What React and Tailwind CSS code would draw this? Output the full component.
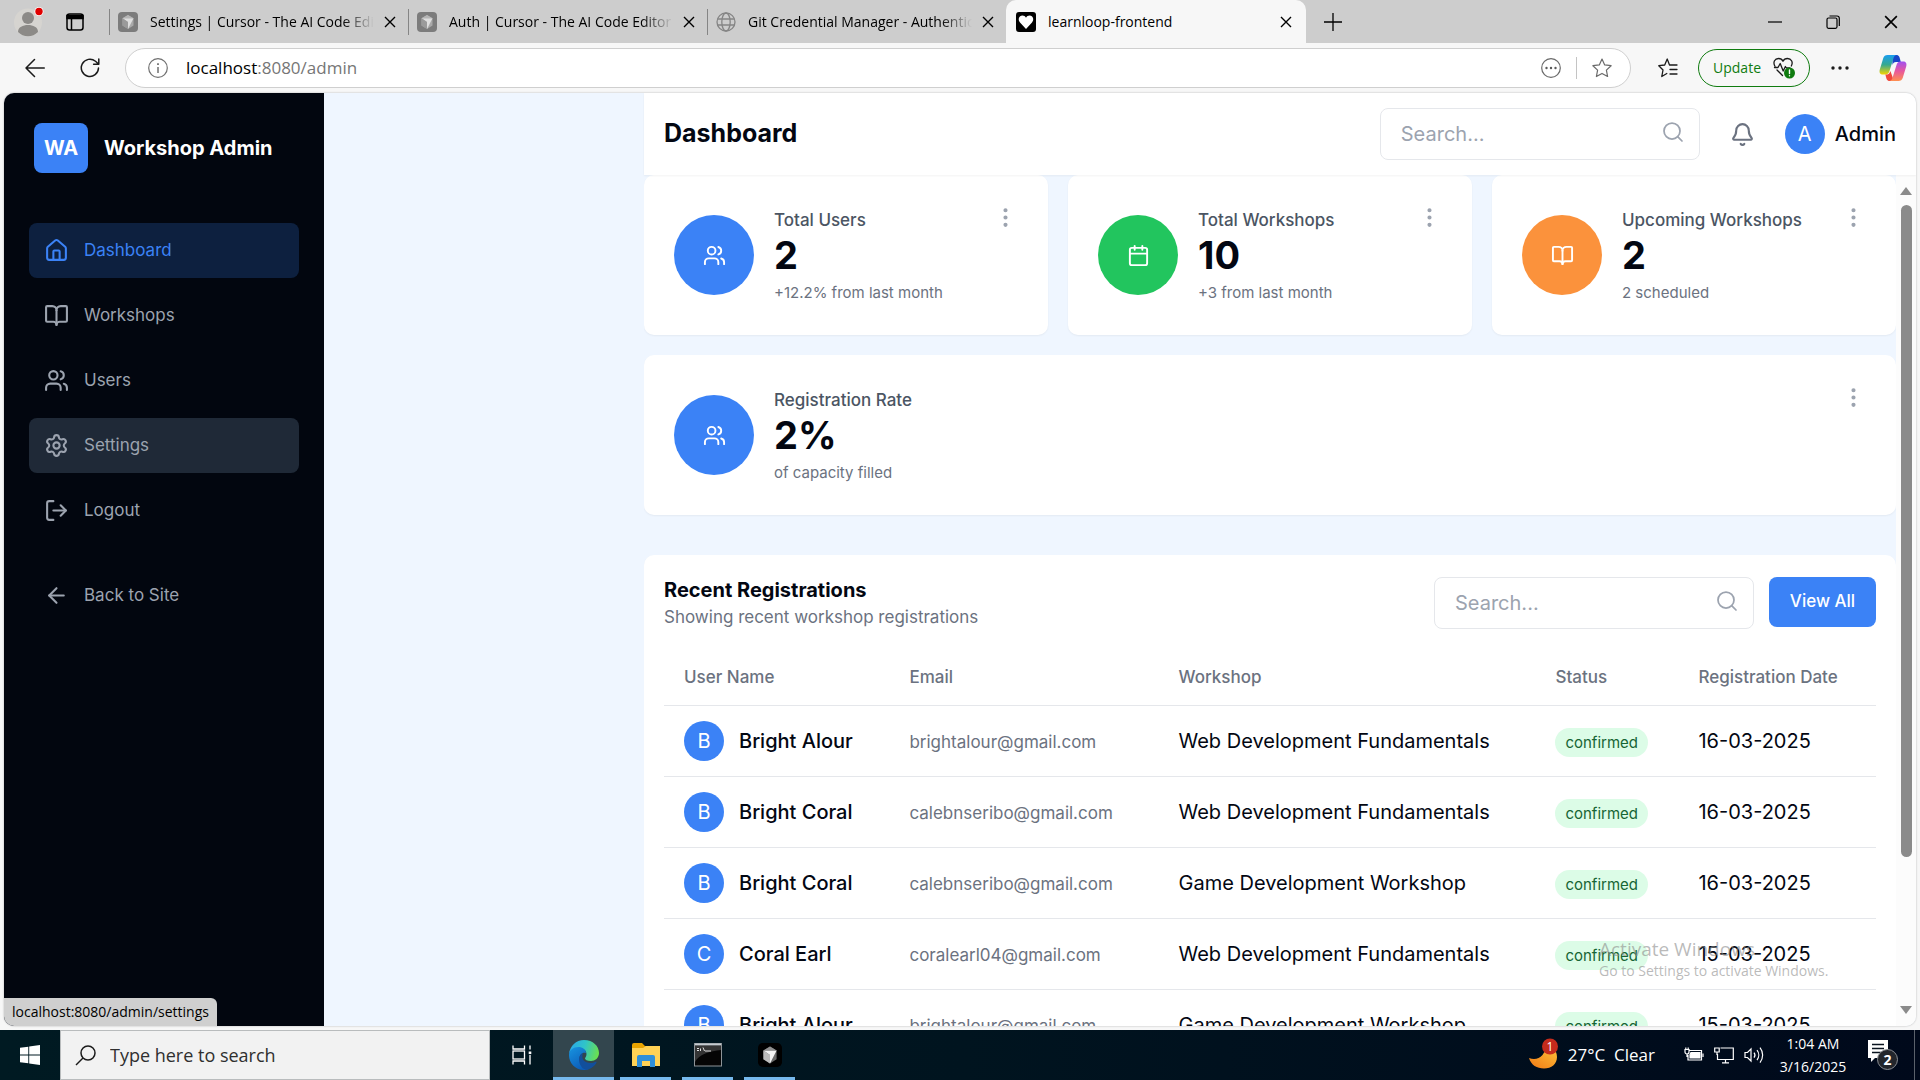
import React from "react";
import {
  ArrowLeft,
  Bell,
  BookOpen,
  Calendar,
  EllipsisVertical,
  House,
  LogOut,
  Search,
  Settings,
  Users,
} from "lucide-react";

const uiFont = "font-['Open_Sans','Noto_Sans',sans-serif]";

function CloseGlyph({ className = "h-3 w-3" }) {
  return (
    <svg viewBox="0 0 12 12" className={className} fill="none" stroke="currentColor" strokeWidth="1.4">
      <path d="M1 1l10 10M11 1L1 11" />
    </svg>
  );
}

function CubeIcon({ dark = false, className }) {
  return (
    <svg viewBox="0 0 20 20" className={className}>
      <rect width="20" height="20" rx="4" fill={dark ? "#000" : "#7c7c7c"} />
      <path d="M10 3l5.5 3.2v7.4L10 17l-5.500-3.400V6.200z" fill={dark ? "#6b6b6b" : "#a9a9a9"} />
      <path d="M4.500 6.200h11L10 17V10z" fill={dark ? "#f4f4f4" : "#dedede"} />
      <path d="M10 3l5.500 3.200h-11z" fill={dark ? "#8f8f8f" : "#b5b5b5"} />
      <path d="M4.500 6.200L10 10v7l-5.500-3.400z" fill={dark ? "#bdbdbd" : "#9a9a9a"} />
    </svg>
  );
}

function GlobeIcon() {
  return (
    <svg viewBox="0 0 20 20" className="h-5 w-5 shrink-0" fill="none" stroke="#858585" strokeWidth="1.3">
      <circle cx="10" cy="10" r="9" />
      <ellipse cx="10" cy="10" rx="4.200" ry="9" />
      <path d="M1.800 7h16.400M1.800 13h16.400" />
    </svg>
  );
}

function HeartIcon() {
  return (
    <svg viewBox="0 0 20 20" className="h-5 w-5 shrink-0">
      <rect width="20" height="20" rx="3" fill="#000" />
      <path d="M10 17L4 10.500C1.500 7.500 3 3.500 6.300 3.500c1.700 0 3 .8 3.700 2.200.7-1.400 2-2.200 3.700-2.200 3.300 0 4.800 4 2.300 7z" fill="#fff" />
    </svg>
  );
}

const tabs = [
  { title: "Settings | Cursor - The AI Code Editor", icon: <CubeIcon className="h-5 w-5 shrink-0" /> },
  { title: "Auth | Cursor - The AI Code Editor", icon: <CubeIcon className="h-5 w-5 shrink-0" /> },
  { title: "Git Credential Manager - Authentication", icon: <GlobeIcon /> },
];

function TabBar() {
  return (
    <div className="flex h-[43px] shrink-0 items-center bg-[#cdcdcd] text-black">
      <button aria-label="Profile" className="ml-3.5 flex">
        <svg viewBox="0 0 30 30" className="h-[30px] w-[30px]">
          <circle cx="14" cy="15.500" r="14" fill="#d6d4d0" />
          <circle cx="14" cy="11" r="6" fill="#8c8a87" />
          <path d="M4 25c0-5 5-7 10-7s10 2 10 7a14 14 0 0 1-20 0z" fill="#8c8a87" />
          <circle cx="25" cy="4.500" r="4.500" fill="#fff" />
          <circle cx="25" cy="4.500" r="3.700" fill="#e00000" />
        </svg>
      </button>
      <button aria-label="Tab actions" className="ml-[22px] flex">
        <svg viewBox="0 0 18 18" className="h-[18px] w-[18px]" fill="none" stroke="#000" strokeWidth="1.500">
          <rect x="1" y="1" width="16" height="16" rx="2.500" />
          <path d="M1 2.500h16v3H1z" fill="#000" />
          <path d="M5.500 5v12" />
        </svg>
      </button>
      <div className="ml-[25px] flex h-full items-center">
        {tabs.map((t) => (
          <div key={t.title} className="flex h-full w-[299px] items-center pr-3">
            <div className="mr-2 h-[26px] w-px bg-[#858585]" />
            {t.icon}
            <span className="ml-3 min-w-0 flex-1 overflow-hidden whitespace-nowrap text-sm [mask-image:linear-gradient(to_right,#000_86%,transparent)]">
              {t.title}
            </span>
            <button aria-label="Close tab" className="ml-2.5 flex">
              <CloseGlyph />
            </button>
          </div>
        ))}
      </div>
      <div className="flex h-full w-[300px] items-center rounded-t-[10px] bg-[#f7f7f7] pl-2.5 pr-3.5">
        <HeartIcon />
        <span className="ml-3 flex-1 text-sm">learnloop-frontend</span>
        <button aria-label="Close tab" className="flex">
          <CloseGlyph />
        </button>
      </div>
      <button aria-label="New tab" className="ml-[18px] flex">
        <svg viewBox="0 0 18 18" className="h-[18px] w-[18px]" stroke="#000" strokeWidth="1.300">
          <path d="M9 0v18M0 9h18" />
        </svg>
      </button>
      <div className="ml-auto mr-[22px] flex items-center gap-11">
        <button aria-label="Minimize" className="flex">
          <svg viewBox="0 0 14 14" className="h-3.5 w-3.5" stroke="#000" strokeWidth="1.200">
            <path d="M0 7h14" />
          </svg>
        </button>
        <button aria-label="Restore" className="flex">
          <svg viewBox="0 0 14 14" className="h-3.5 w-3.5" fill="none" stroke="#000" strokeWidth="1.200">
            <rect x="1" y="3" width="10" height="10.300" rx="1.500" />
            <path d="M3.500 1h7.500a2.300 2.300 0 0 1 2.300 2.300V11" />
          </svg>
        </button>
        <button aria-label="Close" className="flex">
          <CloseGlyph className="h-3.5 w-3.5" />
        </button>
      </div>
    </div>
  );
}

function CopilotIcon() {
  return (
    <svg viewBox="0 0 28 28" className="h-7 w-7">
      <defs>
        <linearGradient id="cpA" x1="0" y1="0" x2="0" y2="1">
          <stop offset="0" stopColor="#1a9df0" />
          <stop offset="0.500" stopColor="#35a98f" />
          <stop offset="1" stopColor="#f5d400" />
        </linearGradient>
        <linearGradient id="cpB" x1="0" y1="0" x2="0" y2="1">
          <stop offset="0" stopColor="#a050f0" />
          <stop offset="0.500" stopColor="#e8589c" />
          <stop offset="1" stopColor="#ff9050" />
        </linearGradient>
      </defs>
      <path d="M17 1c3 0 3.500 2 4 4l.8 3H17c-2 0-3 1-3.500 3L13 1z" fill="#1746c8" />
      <path d="M8.500 1H18c-2 0-3 1.500-3.600 3.500L10.500 17c-.7 2.300-1.800 3.500-4 3.500H4C1 20.500 0 18.500.8 15.500L4.300 4C5 2 6.300 1 8.500 1z" fill="url(#cpA)" />
      <path d="M11 27c-3 0-3.500-2-4-4l-.6-2.500c3 0 4-.5 5-3.500L15 27z" fill="#f0483c" />
      <path d="M19.500 27H10c2 0 3-1.500 3.600-3.500L17.500 11c.7-2.300 1.800-3.500 4-3.500H24c3 0 4 2 3.200 5L23.700 24c-.7 2-2 3-4.200 3z" fill="url(#cpB)" />
    </svg>
  );
}

function Toolbar() {
  return (
    <div className="flex h-[50px] shrink-0 items-center bg-[#f7f7f7]">
      <button aria-label="Back" className="ml-[25px] flex">
        <svg viewBox="0 0 20 20" className="h-5 w-5" fill="none" stroke="#1b1b1b" strokeWidth="1.500" strokeLinecap="round" strokeLinejoin="round">
          <path d="M19.300 10H1M9.500 1.500L1 10l8.500 8.500" />
        </svg>
      </button>
      <button aria-label="Refresh" className="ml-[35px] flex">
        <svg viewBox="0 0 20 20" className="h-5 w-5" fill="none" stroke="#1b1b1b" strokeWidth="1.500" strokeLinecap="round" strokeLinejoin="round">
          <path d="M18.500 10a8.600 8.600 0 1 1-3-6.700L18.500 6M18.800 1v5.200h-5.200" />
        </svg>
      </button>
      <div className="ml-[25px] flex h-10 min-w-0 flex-1 items-center rounded-full border border-[#cfcfcf] bg-white pl-[22px] pr-[18px]">
        <svg viewBox="0 0 20 20" className="h-5 w-5 shrink-0" fill="none" stroke="#707070" strokeWidth="1.200">
          <circle cx="10" cy="10" r="9.300" />
          <path d="M10 9v6" strokeWidth="1.500" />
          <path d="M10 5.200v1.800" strokeWidth="1.800" />
        </svg>
        <div className="ml-[18px] flex-1 text-[17px] text-[#767676]">
          <span className="text-black">localhost</span>:8080/admin
        </div>
        <button aria-label="More actions" className="flex">
          <svg viewBox="0 0 20 20" className="h-5 w-5" fill="none" stroke="#6a6a6a" strokeWidth="1.200">
            <circle cx="10" cy="10" r="9.300" />
            <g fill="#5a5a5a" stroke="none">
              <circle cx="5.500" cy="10" r="1.200" />
              <circle cx="10" cy="10" r="1.200" />
              <circle cx="14.500" cy="10" r="1.200" />
            </g>
          </svg>
        </button>
        <div className="mx-[15px] h-[22px] w-px bg-[#c4c4c4]" />
        <button aria-label="Favorite this page" className="flex">
          <svg viewBox="0 0 20 20" className="h-5 w-5" fill="none" stroke="#6a6a6a" strokeWidth="1.200" strokeLinejoin="round">
            <path d="M10 1l2.700 5.900 6.400.8-4.700 4.400 1.200 6.400L10 15.400l-5.600 3.100 1.200-6.400L.9 7.700l6.400-.8z" />
          </svg>
        </button>
      </div>
      <button aria-label="Favorites" className="ml-[27px] flex">
        <svg viewBox="0 0 20 20" className="h-5 w-5" fill="none" stroke="#1b1b1b" strokeWidth="1.300" strokeLinejoin="round" strokeLinecap="round">
          <path d="M11.500 7L9.200 1 6.700 7 .8 7.700 5 12l-1.200 6.500 5-3M11.500 7H19M12 11.500h7M12 16h7" />
        </svg>
      </button>
      <button className="ml-5 flex h-[38px] items-center gap-3 rounded-full border border-[#107c10] px-3.5 text-sm text-[#107c10]">
        Update
        <svg viewBox="0 0 22 22" className="h-[22px] w-[22px]" fill="none" stroke="#1b1b1b" strokeWidth="1.300" strokeLinejoin="round" strokeLinecap="round">
          <path d="M2 9.500C-.5 5 2 1.500 5.500 1.500c2 0 3.700 1 4.500 2.700.8-1.700 2.500-2.700 4.500-2.700 3.600 0 6 3.500 3.800 7.500M4 13l5.500 5.500M1.500 10.500H5l2.200-4 3 7.500 2.200-4.500 1 1.500H17" />
          <circle cx="16.500" cy="16" r="5.500" fill="#107c10" stroke="none" />
          <path d="M16.500 13v3.500M16.500 18.700v.1" stroke="#fff" strokeWidth="1.400" />
        </svg>
      </button>
      <button aria-label="Settings and more" className="ml-[21px] flex">
        <svg viewBox="0 0 18 4" className="h-1 w-[18px]" fill="#1b1b1b">
          <circle cx="2" cy="2" r="1.700" />
          <circle cx="9" cy="2" r="1.700" />
          <circle cx="16" cy="2" r="1.700" />
        </svg>
      </button>
      <button aria-label="Copilot" className="ml-[30px] mr-[13px] flex">
        <CopilotIcon />
      </button>
    </div>
  );
}

const navItems = [
  { label: "Dashboard", Icon: House, look: "bg-[#0d203f] text-[#3b82f6]" },
  { label: "Workshops", Icon: BookOpen, look: "text-[#9ca3af]" },
  { label: "Users", Icon: Users, look: "text-[#9ca3af]" },
  { label: "Settings", Icon: Settings, look: "bg-[#1f2937] text-[#9ca3af]" },
  { label: "Logout", Icon: LogOut, look: "text-[#9ca3af]" },
];

function NavLink({ label, Icon, look }) {
  return (
    <a href="#" className={`flex h-[55px] items-center gap-[15px] rounded-lg px-[15px] text-[17px] ${look}`}>
      <Icon size={25} strokeWidth={2} />
      {label}
    </a>
  );
}

function Sidebar() {
  return (
    <aside className="w-80 shrink-0 bg-[#02060f] px-[25px] py-[30px]">
      <div className="flex items-center gap-4 px-[5px]">
        <div className="flex h-[50px] w-[54px] items-center justify-center rounded-lg bg-[#3b82f6] text-xl font-bold text-white">
          WA
        </div>
        <span className="whitespace-nowrap text-xl font-bold text-white">Workshop Admin</span>
      </div>
      <nav className="mt-[50px] flex flex-col gap-2.5">
        {navItems.map((n) => (
          <NavLink key={n.label} {...n} />
        ))}
      </nav>
      <div className="mt-[30px]">
        <NavLink label="Back to Site" Icon={ArrowLeft} look="text-[#9ca3af]" />
      </div>
    </aside>
  );
}

function SearchBox({ label }) {
  return (
    <label className="relative block">
      <span className="sr-only">{label}</span>
      <input
        type="text"
        placeholder="Search..."
        className="block h-[52px] w-80 rounded-lg border border-[#e5e7eb] bg-white px-5 text-xl outline-none placeholder:text-[#9ca3af]"
      />
      <Search size={24} strokeWidth={1.75} className="absolute right-[15px] top-3 text-[#9ca3af]" />
    </label>
  );
}

function Avatar({ letter }) {
  return (
    <div className="flex h-10 w-10 shrink-0 items-center justify-center rounded-full bg-[#3b82f6] text-xl text-white">
      {letter}
    </div>
  );
}

function StatCard({ title, value, note, Icon, color, span = "" }) {
  return (
    <section className={`flex h-40 items-center gap-5 rounded-[10px] bg-white px-[30px] shadow-xs ${span}`}>
      <div className={`flex h-20 w-20 shrink-0 items-center justify-center rounded-full text-white ${color}`}>
        <Icon size={23} strokeWidth={2} />
      </div>
      <div className="flex-1">
        <h3 className="whitespace-nowrap text-[17px] font-medium leading-[25px] text-[#4b5563]">{title}</h3>
        <p className="text-[38px] font-bold leading-[45px] text-[#030712]">{value}</p>
        <p className="mt-[5px] text-[15px] leading-5 text-[#6b7280]">{note}</p>
      </div>
      <button aria-label={`${title} options`} className="mt-[30px] flex self-start text-[#9ca3af]">
        <EllipsisVertical size={25} />
      </button>
    </section>
  );
}

const rows = [
  ["Bright Alour", "brightalour@gmail.com", "Web Development Fundamentals", "16-03-2025"],
  ["Bright Coral", "calebnseribo@gmail.com", "Web Development Fundamentals", "16-03-2025"],
  ["Bright Coral", "calebnseribo@gmail.com", "Game Development Workshop", "16-03-2025"],
  ["Coral Earl", "coralearl04@gmail.com", "Web Development Fundamentals", "15-03-2025"],
  ["Bright Alour", "brightalour@gmail.com", "Game Development Workshop", "15-03-2025"],
];

function Registrations() {
  return (
    <section className="mt-10 rounded-[10px] bg-white p-5 shadow-xs">
      <div className="mb-5 flex items-center justify-between">
        <div>
          <h2 className="text-xl font-bold leading-[30px] text-[#030712]">Recent Registrations</h2>
          <p className="text-[17px] leading-[25px] text-[#6b7280]">Showing recent workshop registrations</p>
        </div>
        <div className="flex items-start gap-[15px]">
          <SearchBox label="Search registrations" />
          <button className="h-[50px] w-[107px] rounded-lg bg-[#3b82f6] text-[17px] font-medium text-white">View All</button>
        </div>
      </div>
      <table className="w-full table-fixed text-left">
        <colgroup>
          <col className="w-[18.6%]" />
          <col className="w-[22.2%]" />
          <col className="w-[31.1%]" />
          <col className="w-[11.8%]" />
          <col className="w-[16.3%]" />
        </colgroup>
        <thead>
          <tr className="border-b border-[#e5e7eb] text-[17px] leading-[25px] text-[#6b7280]">
            {["User Name", "Email", "Workshop", "Status", "Registration Date"].map((h) => (
              <th key={h} className="whitespace-nowrap px-5 py-[15px] font-medium">
                {h}
              </th>
            ))}
          </tr>
        </thead>
        <tbody>
          {rows.map(([name, email, workshop, date], i) => (
            <tr key={i} className="border-b border-[#e5e7eb] text-xl text-[#030712]">
              <td className="px-5 py-[15px]">
                <div className="flex items-center gap-[15px]">
                  <Avatar letter={name[0]} />
                  <span className="whitespace-nowrap font-medium">{name}</span>
                </div>
              </td>
              <td className="px-5">
                <span className="text-[17px] text-[#6b7280]">{email}</span>
              </td>
              <td className="whitespace-nowrap px-5">{workshop}</td>
              <td className="px-5">
                <span className="rounded-full bg-[#dcfce7] px-2.5 py-[5px] text-[15px] text-[#166534]">confirmed</span>
              </td>
              <td className="whitespace-nowrap px-5">{date}</td>
            </tr>
          ))}
        </tbody>
      </table>
    </section>
  );
}

function Scrollbar() {
  return (
    <div className="flex w-5 shrink-0 flex-col items-center bg-[#fcfcfc] pb-3 pt-3" aria-hidden="true">
      <svg viewBox="0 0 12 8" className="h-2 w-3">
        <path d="M6 0l6 8H0z" fill="#8b8b8b" />
      </svg>
      <div className="mt-2.5 w-[11px] flex-[653] rounded-full bg-[#8b8b8b]" />
      <div className="flex-[149]" />
      <svg viewBox="0 0 12 8" className="h-2 w-3">
        <path d="M0 0h12L6 8z" fill="#8b8b8b" />
      </svg>
    </div>
  );
}

function AdminPage() {
  return (
    <div className="relative flex min-h-0 flex-1 overflow-hidden rounded-[10px] bg-[#eff6ff] font-['Inter',sans-serif] shadow-[0_0_2px_rgba(0,0,0,0.3)]">
      <Sidebar />
      <main className="ml-80 flex min-w-0 flex-1 flex-col">
        <header className="relative flex shrink-0 items-center bg-white px-5 py-[15px] shadow-xs">
          <h1 className="flex-1 text-[25px] font-bold text-[#030712]">Dashboard</h1>
          <SearchBox label="Search" />
          <button aria-label="Notifications" className="ml-[30px] flex text-[#6b7280]">
            <Bell size={25} strokeWidth={2} />
          </button>
          <div className="ml-[30px] flex items-center gap-2.5">
            <Avatar letter="A" />
            <span className="text-xl font-medium text-[#030712]">Admin</span>
          </div>
        </header>
        <div className="flex min-h-0 flex-1">
          <div className="min-w-0 flex-1 overflow-hidden">
            <div className="grid grid-cols-3 gap-5">
              <StatCard title="Total Users" value="2" note="+12.2% from last month" Icon={Users} color="bg-[#3b82f6]" />
              <StatCard title="Total Workshops" value="10" note="+3 from last month" Icon={Calendar} color="bg-[#22c55e]" />
              <StatCard title="Upcoming Workshops" value="2" note="2 scheduled" Icon={BookOpen} color="bg-[#fb923c]" />
              <StatCard title="Registration Rate" value="2%" note="of capacity filled" Icon={Users} color="bg-[#3b82f6]" span="col-span-3" />
            </div>
            <Registrations />
          </div>
          <Scrollbar />
        </div>
      </main>
      <div className={`absolute bottom-0 left-0 rounded-tr-md bg-[#cfcfcf] px-2 py-1 text-sm text-black ${uiFont}`}>
        localhost:8080/admin/settings
      </div>
    </div>
  );
}

function EdgeIcon() {
  return (
    <svg viewBox="0 0 30 30" className="h-[30px] w-[30px]">
      <defs>
        <linearGradient id="edA" x1="0" y1="0.300" x2="1" y2="0.500">
          <stop offset="0" stopColor="#2aa6e8" />
          <stop offset="0.500" stopColor="#30c4c8" />
          <stop offset="1" stopColor="#6be04f" />
        </linearGradient>
        <linearGradient id="edB" x1="0" y1="0" x2="0.600" y2="1">
          <stop offset="0" stopColor="#1894e0" />
          <stop offset="1" stopColor="#0c5cb8" />
        </linearGradient>
      </defs>
      <path d="M0 14C1 6 7 0 15 0c9 0 15 6 15 13 0 5-4 8-8 8-4 0-6-1.500-6-2.600 0-.8 1.500-1.600 1.500-4.400 0-3.500-3.500-6-7.500-6-5 0-9 3-10 6z" fill="url(#edA)" />
      <path d="M0 15c0-5 4.500-8 9.500-8 4 0 7.500 2.500 7.500 6-4-1-6.500 2-6.500 5.500C10.500 24 15 29 20 29c-2 .8-3.500 1-5 1C6 30 0 23 0 15z" fill="url(#edB)" />
      <path d="M14 13c-2.500 1-4 3.500-4 6.500C10 25 14 30 18 29.700c4-.9 8-3.700 9.500-7.200.3-.7-.3-1-.9-.7C25 22.600 23.500 23 21.500 23c-5.500 0-10-3.500-7.500-10z" fill="#124f9c" />
    </svg>
  );
}

function ExplorerIcon() {
  return (
    <svg viewBox="0 0 28 24" className="h-6 w-7">
      <path d="M0 2a2 2 0 0 1 2-2h8l3 3h13a2 2 0 0 1 2 2v18H0z" fill="#e9a400" />
      <path d="M0 5h11l3-2h14v20H0z" fill="#ffd255" />
      <path d="M5 24V14a2 2 0 0 1 2-2h14a2 2 0 0 1 2 2v10h-5v-6h-8v6z" fill="#2f8fd8" />
    </svg>
  );
}

function TerminalIcon() {
  return (
    <svg viewBox="0 0 28 24" className="h-6 w-7">
      <rect x="0.500" y="0.500" width="27" height="22.500" fill="#050505" stroke="#8e9498" />
      <path d="M1 1.500h26" stroke="#c5cbd0" strokeWidth="2" />
      <path d="M1 3h26v4C16 8 5 11 1 19z" fill="#343434" />
      <path d="M3 5.500h2M3 7.500h2M6.500 5.500v2.500M9 4.500l1.500 3.500M11 8h6" stroke="#e0e0e0" strokeWidth="1" />
    </svg>
  );
}

function TaskButton({ label, active = false, children }) {
  return (
    <button
      aria-label={label}
      className={
        active
          ? "flex h-full w-[61px] items-center justify-center border-b-[3px] border-[#76b9ed] bg-[#33464e] pt-[3px]"
          : "flex h-full w-[51px] items-center justify-center border-b-[3px] border-[#76b9ed] pt-[3px]"
      }
    >
      {children}
    </button>
  );
}

function Taskbar() {
  return (
    <footer className="flex h-[50px] shrink-0 items-center bg-gradient-to-r from-[#001a22] via-[#00141f] to-[#00091b] text-white">
      <button aria-label="Start" className="flex w-[60px] justify-center">
        <svg viewBox="0 0 20 20" className="h-5 w-5" fill="#fff">
          <path d="M0 2.800L8.300 1.700v7.800H0zM9.200 1.500L20 0v9.500H9.200zM0 10.400h8.300v7.900L0 17.200zM9.200 10.400H20V20L9.200 18.500z" />
        </svg>
      </button>
      <label className="flex h-full w-[430px] items-center border border-[#b9bcbd] bg-[#f2f2f2] pl-3.5">
        <svg viewBox="0 0 21 21" className="h-[21px] w-[21px]" fill="none" stroke="#1b1b1b" strokeWidth="1.500">
          <circle cx="13" cy="8" r="7" />
          <path d="M8 13L1 20" />
        </svg>
        <span className="sr-only">Search Windows</span>
        <input
          type="text"
          placeholder="Type here to search"
          className="ml-3.5 min-w-0 flex-1 bg-transparent text-lg text-black outline-none placeholder:text-[#2f2f2f]"
        />
      </label>
      <button aria-label="Task view" className="flex w-[63px] justify-center">
        <svg viewBox="0 0 20 20" className="h-5 w-5" fill="none" stroke="#fff" strokeWidth="1.300">
          <path d="M1 .5v3.500h11.500V.5M1 19.500V16h11.500v3.500M18 .5v4M18 10v9.500" />
          <rect x="1" y="6" width="11.500" height="8" />
          <rect x="16.700" y="6.500" width="2.600" height="2.600" fill="#fff" stroke="none" />
        </svg>
      </button>
      <div className="flex h-full items-center">
        <TaskButton label="Microsoft Edge" active>
          <EdgeIcon />
        </TaskButton>
        <div className="ml-1.5 flex h-full gap-[11px]">
          <TaskButton label="File Explorer">
            <ExplorerIcon />
          </TaskButton>
          <TaskButton label="Command Prompt">
            <TerminalIcon />
          </TaskButton>
          <TaskButton label="Cursor">
            <CubeIcon dark className="h-6 w-6" />
          </TaskButton>
        </div>
      </div>
      <button className="ml-auto flex items-center text-[17px]">
        <svg viewBox="0 0 30 34" className="mr-2.5 h-[34px] w-[30px]">
          <defs>
            <linearGradient id="moon" x1="1" y1="0" x2="0.300" y2="1">
              <stop offset="0" stopColor="#ffc83d" />
              <stop offset="1" stopColor="#f2831a" />
            </linearGradient>
          </defs>
          <path d="M1 20c5 2 10 1 13.500-3C17 14 18 10 17 6c7 1 12 6 12 13 0 7-5.500 11.500-13 11.500C9 30.500 3 27 1 20z" fill="url(#moon)" />
          <circle cx="22" cy="8.500" r="8" fill="#c42b1c" />
          <text x="22" y="13" textAnchor="middle" fontSize="12" fill="#fff">1</text>
        </svg>
        27°C&nbsp;&nbsp;Clear
      </button>
      <div className="ml-[29px] flex items-center gap-2.5">
        <svg viewBox="0 0 20 20" className="h-5 w-5" fill="none" stroke="#fff" strokeWidth="1.200">
          <path d="M5.500 5.500h12v9.500H4v-5M1 4.500h4v2.500a2 2 0 0 1-4 0zM1.800 2.500v2M4.200 2.500v2M3 9v3" />
          <path d="M7 7.500h9v5.500H6v-3.500z" fill="#fff" />
          <path d="M19 8.500v3.500" />
        </svg>
        <svg viewBox="0 0 20 20" className="h-5 w-5" fill="none" stroke="#fff" strokeWidth="1.200">
          <path d="M6.500 3H19.300v11.500H3.500V9M8 17.800h7M11.500 14.500v3.300" />
          <path d="M.7 3h4.500v4H.7zM3 7v3" />
        </svg>
        <svg viewBox="0 0 20 20" className="h-5 w-5" fill="none" stroke="#fff" strokeWidth="1.200">
          <path d="M1 7.500h2.500L7 4v12l-3.500-3.500H1z" />
          <path d="M10 7.500a4 4 0 0 1 0 5M13 5a8 8 0 0 1 0 10M16 2.500a12 12 0 0 1 0 15" />
        </svg>
      </div>
      <div className="ml-3.5 flex w-[70px] flex-col items-center text-sm leading-[23px]">
        <span>1:04 AM</span>
        <span>3/16/2025</span>
      </div>
      <button aria-label="2 notifications" className="ml-[19px] mr-[15px] flex">
        <svg viewBox="0 0 32 32" className="h-8 w-8">
          <path d="M1 1h20v18H8l-4 4v-4H1z" fill="#fff" />
          <path d="M5 5.500h12M5 9.500h12M5 13.500h9" stroke="#0a1420" strokeWidth="1.300" />
          <circle cx="20.500" cy="20.500" r="10" fill="#23262c" stroke="#8a8d92" />
          <text x="20.500" y="25.500" textAnchor="middle" fontSize="14" fontWeight="700" fill="#fff">2</text>
        </svg>
      </button>
      <div className="mr-[5px] h-full w-px bg-[#5a616b]" />
    </footer>
  );
}

export default function App() {
  return (
    <div className={`relative flex h-screen flex-col overflow-hidden bg-[#f7f7f7] ${uiFont}`}>
      <TabBar />
      <Toolbar />
      <div className="flex min-h-0 flex-1 flex-col px-1 pb-1">
        <AdminPage />
      </div>
      <Taskbar />
      <div className="pointer-events-none absolute bottom-[99px] right-[85px] w-[236px] whitespace-nowrap text-[#8c8c8c]/60">
        <p className="text-[19px] leading-6">Activate Windows</p>
        <p className="text-sm leading-5">Go to Settings to activate Windows.</p>
      </div>
    </div>
  );
}
